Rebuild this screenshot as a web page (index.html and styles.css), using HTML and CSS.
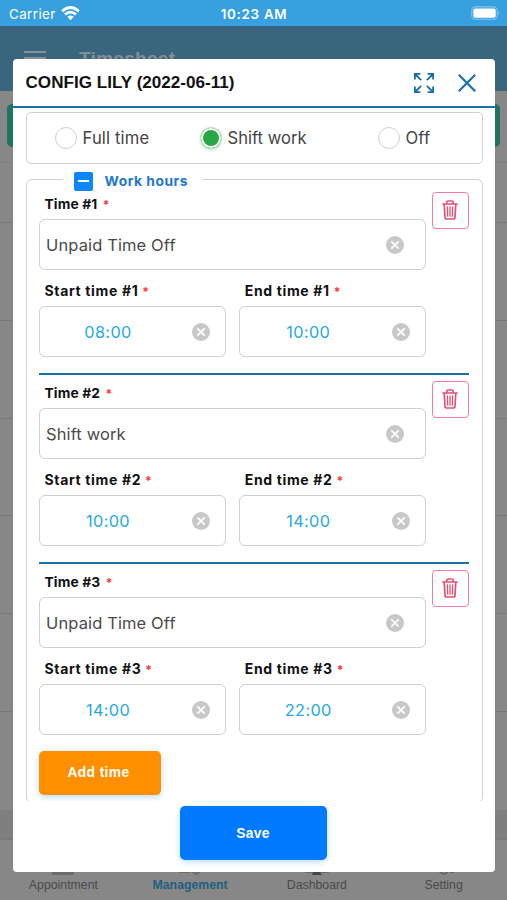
FILE: index.html
```html
<!DOCTYPE html>
<html lang="en">
<head>
<meta charset="utf-8">
<title>Timesheet</title>
<link rel="stylesheet" href="styles.css">
</head>
<body>
<svg class="defs" aria-hidden="true">
  <symbol id="clear" viewBox="0 0 18 18"><circle cx="9" cy="9" r="9" fill="#c8c8c8"/><path d="M5.3 5.3l7.4 7.4M12.7 5.3l-7.4 7.4" stroke="#fff" stroke-width="1.7" fill="none"/></symbol>
  <symbol id="trash" viewBox="0 0 16 20"><path d="M.8 4h14.4M4.8 3.8V2.4Q4.8 1 6.2 1h3.6Q11.2 1 11.2 2.4v1.4M2.2 4.2l.8 13Q3.1 19 4.8 19h6.4Q12.9 19 13 17.2L13.8 4.2" fill="none" stroke="#e84f74" stroke-width="1.7" stroke-linecap="round"/><path d="M5.4 6.8l.3 9.4M8 6.8v9.4M10.6 6.8l-.3 9.4" fill="none" stroke="#e84f74" stroke-width="1.3" stroke-linecap="round"/></symbol>
</svg>
<div class="app">
  <div class="status">
    <span class="carrier">Carrier
      <svg width="19" height="15" viewBox="0 0 19 15"><g fill="none" stroke="#fff" stroke-width="2.7"><path d="M1.2 5.2Q9.5-2.2 17.8 5.2"/><path d="M4.1 8.5Q9.5 3.6 14.9 8.5"/></g><path d="M6.4 10.8Q9.5 8 12.6 10.8L9.5 14.2z" fill="#fff"/></svg>
    </span>
    <span class="clock">10:23 AM</span>
    <svg class="battery" width="30" height="15" viewBox="0 0 30 15"><rect x=".8" y=".9" width="25.4" height="12.4" rx="3.6" fill="none" stroke="#84c5ec" stroke-width="1.1"/><rect x="2.3" y="2.4" width="22.4" height="9.4" rx="2" fill="#fff"/><path d="M27.4 5.2q2.4 1.9 0 3.8z" fill="#84c5ec"/></svg>
  </div>
  <div class="appbar"><span class="menu"><i></i><i></i><i></i></span><span class="apptitle">Timesheet</span></div>
  <div class="content">
    <div class="banner"></div>
    <div class="rows"><div></div><div></div><div></div><div></div><div></div><div></div><div></div></div>
    <div class="strip"></div>
  </div>
  <div class="tabs">
    <div class="tab"><svg width="24" height="6"><path d="M1 0h22v5H1z" fill="#6b6b6b"/></svg>Appointment</div>
    <div class="tab active"><svg width="24" height="6"><path d="M1 2h11M13 1l6 3 3-3" fill="none" stroke="#6b6b6b" stroke-width="2"/></svg>Management</div>
    <div class="tab"><svg width="24" height="6"><path d="M0 0h24v3H0z" fill="#6b6b6b"/><path d="M8 2h7l2 3H7z" fill="#454545"/></svg>Dashboard</div>
    <div class="tab"><svg width="24" height="6"><path d="M1 1h6l2 2M8 1q4 6 8 0M18 1q2 3 4 0" fill="none" stroke="#646464" stroke-width="1.6"/></svg>Setting</div>
  </div>
</div>

<div class="modal">
  <div class="modal-head">
    <h1>CONFIG LILY (2022-06-11)</h1>
    <svg class="expand" width="20" height="20" viewBox="0 0 20 20" fill="none" stroke="#1a71a6" stroke-width="1.8"><path d="M.9 6.4V.9h5.5M1 1l6.2 6.2M13.6.9h5.5v5.5M19 1l-6.2 6.2M.9 13.6v5.5h5.5M1 19l6.2-6.2M19.1 13.6v5.5h-5.5M19 19l-6.2-6.2"/></svg>
    <svg width="18" height="18" viewBox="0 0 18 18" fill="none" stroke="#1a71a6" stroke-width="2.2"><path d="M.8.8l16.4 16.4M17.2.8L.8 17.2"/></svg>
  </div>
  <div class="scroll">
    <div class="radios">
      <span class="radio r1"><i></i>Full time</span>
      <span class="radio r2 on"><i></i>Shift work</span>
      <span class="radio r3"><i></i>Off</span>
    </div>
    <div class="group">
      <div class="legend"><span class="check"></span>Work hours</div>
      <div class="entry">
        <div class="fields">
          <label>Time #1 <b>*</b></label>
          <div class="input">Unpaid Time Off<svg><use href="#clear"/></svg></div>
          <div class="pair">
            <div><label>Start time #1 <b>*</b></label><div class="input time"><span>08:00</span><svg><use href="#clear"/></svg></div></div>
            <div><label>End time #1 <b>*</b></label><div class="input time"><span>10:00</span><svg><use href="#clear"/></svg></div></div>
          </div>
        </div>
        <div class="del"><svg><use href="#trash"/></svg></div>
      </div>
      <div class="entry">
        <div class="fields">
          <label>Time #2 <b>*</b></label>
          <div class="input">Shift work<svg><use href="#clear"/></svg></div>
          <div class="pair">
            <div><label>Start time #2 <b>*</b></label><div class="input time"><span>10:00</span><svg><use href="#clear"/></svg></div></div>
            <div><label>End time #2 <b>*</b></label><div class="input time"><span>14:00</span><svg><use href="#clear"/></svg></div></div>
          </div>
        </div>
        <div class="del"><svg><use href="#trash"/></svg></div>
      </div>
      <div class="entry last">
        <div class="fields">
          <label>Time #3 <b>*</b></label>
          <div class="input">Unpaid Time Off<svg><use href="#clear"/></svg></div>
          <div class="pair">
            <div><label>Start time #3 <b>*</b></label><div class="input time"><span>14:00</span><svg><use href="#clear"/></svg></div></div>
            <div><label>End time #3 <b>*</b></label><div class="input time"><span>22:00</span><svg><use href="#clear"/></svg></div></div>
          </div>
        </div>
        <div class="del"><svg><use href="#trash"/></svg></div>
      </div>
      <div class="btn add">Add time</div>
    </div>
  </div>
  <div class="btn save">Save</div>
</div>
</body>
</html>
```
FILE: styles.css
```css
* { box-sizing: border-box; }
body { margin: 0; width: 507px; height: 900px; overflow: hidden; position: relative; font-family: Inter, sans-serif; }
svg { display: block; flex: none; }
.defs { position: absolute; width: 0; height: 0; }

.app { height: 900px; display: flex; flex-direction: column; background: #878787; }
.status { height: 26px; background: #38a0df; color: #fff; display: grid; grid-template-columns: 1fr auto 1fr; align-items: center; padding: 1px 6px 0 9px; font-size: 13.4px; }
.carrier { display: flex; align-items: center; gap: 5px; letter-spacing: .4px; }
.carrier svg { margin-top: -1px; }
.clock { font-weight: 600; font-size: 13.3px; letter-spacing: .75px; margin: 0 1px 0 -1px; }
.battery { justify-self: end; }
.appbar { height: 65px; background: #3a657f; display: flex; padding: 25px 24px 0; }
.menu { width: 22px; display: flex; flex-direction: column; gap: 4px; }
.menu i { height: 2px; background: #858e94; }
.apptitle { margin: -5px 0 0 33px; font: bold 19px/26px "Liberation Sans", sans-serif; color: #858e94; letter-spacing: .3px; }
.content { height: 749px; display: flex; flex-direction: column; }
.banner { margin: 13px 7px 15px; height: 43px; flex: none; border-radius: 5px; background: #20745f; }
.rows { flex: 1; border-top: 1px solid #7d7d7d; }
.rows div { height: 97.8px; border-bottom: 1px solid #797979; }
.rows div:first-child { height: 60px; }
.rows div:last-child { border: 0; }
.strip { height: 30px; flex: none; background: #7f7f7f; border-bottom: 2px solid #7a7a7a; }
.tabs { height: 60px; padding-top: 30px; display: grid; grid-template-columns: repeat(4, 1fr); background: #878787; }
.tab { display: flex; flex-direction: column; align-items: center; font: 12.3px/14px "Liberation Sans", sans-serif; color: #4a4a4a; gap: 2px; }
.active { font-weight: bold; color: #235f82; }

.modal { position: absolute; left: 13px; top: 59px; width: 482px; height: 813px; border-radius: 4px; background: #fff; display: flex; flex-direction: column; }
.modal-head { height: 49px; flex: none; border-bottom: 2.5px solid #1a71a6; display: flex; align-items: center; padding: 0 19px 0 12.5px; }
h1 { margin: 0; flex: 1; font: bold 17.1px/24px "Liberation Sans", sans-serif; color: #111; white-space: nowrap; }
.expand { margin-right: 24px; }
.scroll { height: 693px; overflow: hidden; padding: 4px 12px 0 12.5px; display: flex; flex-direction: column; flex: none; }
.radios { height: 52px; flex: none; border: 1.5px solid #d0d0d0; border-radius: 5px; display: flex; align-items: center; font-size: 16.6px; color: #444; }
.radio { display: flex; align-items: center; gap: 6px; letter-spacing: .15px; }
.radio i { width: 22px; height: 22px; border: 1.5px solid #d0d0d0; border-radius: 50%; }
.on { letter-spacing: 0; }
.on i { background: #28a745; border-color: #d4dcd6; box-shadow: inset 0 0 0 2px #fff, 0 1px 3px #b9e4c3; }
.r1 { margin-left: 28px; width: 145px; }
.r2 { width: 178px; }
.group { margin-top: 15px; height: 624px; flex: none; border: 1.5px solid #d0d0d0; border-radius: 6px; padding: 6px 13px 0 12px; display: flex; flex-direction: column; }
.legend { height: 20px; margin: -15px 0 -5px 24px; width: 139px; padding-left: 11px; display: flex; align-items: center; gap: 12px; background: #fff; color: #2177d2; font-weight: 700; font-size: 13.8px; line-height: 20px; letter-spacing: .52px; white-space: nowrap; flex: none; }
.check { width: 19px; height: 19px; border-radius: 2px; background: #0d86fb; display: flex; align-items: center; justify-content: center; }
.check::before { content: ""; width: 11px; height: 2px; background: #fff; }
.entry { height: 189px; flex: none; display: flex; justify-content: space-between; padding-top: 6px; border-bottom: 2.5px solid #1a71a6; }
.last { height: 178.5px; border: 0; padding-bottom: 0; }
.fields { width: 387.5px; }
label { display: block; padding-left: 6px; font-size: 13.8px; font-weight: 700; line-height: 24px; height: 27px; color: #111; white-space: nowrap; letter-spacing: .12px; }
.pair label { font-size: 14px; letter-spacing: .65px; }
label b { color: #f33; margin-left: 2px; font-weight: 700; font-size: 12px; }
.pair label b { margin-left: 0; }
.input { height: 51px; border: 1.5px solid #d0d0d0; border-radius: 6px; display: flex; align-items: center; justify-content: space-between; padding: 0 21px 0 6.5px; font-size: 16.5px; letter-spacing: .12px; color: #4a4a4a; }
.input svg { width: 18px; height: 18px; }
.pair { display: flex; gap: 13px; margin-top: 9px; }
.pair > div { flex: 1; }
.time { padding: 0 15px 0 44.5px; color: #27a9e1; font-size: 16.3px; letter-spacing: .35px; }
.time span { width: 48px; text-align: center; }
.del { width: 37px; height: 37px; border: 1.5px solid #f07f9d; border-radius: 4px; display: flex; align-items: center; justify-content: center; }
.del svg { width: 16px; height: 20px; margin: -1px 1px 0 0; }
.btn { display: flex; align-items: center; justify-content: center; color: #fff; font: bold 13.8px/18px "Liberation Sans", sans-serif; border-radius: 5px; flex: none; }
.add { width: 122px; height: 44px; margin-top: 8px; background: #ff8f00; box-shadow: 0 2px 6px #b8dcff; padding-right: 2px; letter-spacing: .4px; }
.save { width: 147px; height: 54px; margin: 5px auto 0 167px; padding: 2px 1px 0 0; background: #007bff; box-shadow: 0 2px 6px #b8dcff; letter-spacing: .3px; }
```
